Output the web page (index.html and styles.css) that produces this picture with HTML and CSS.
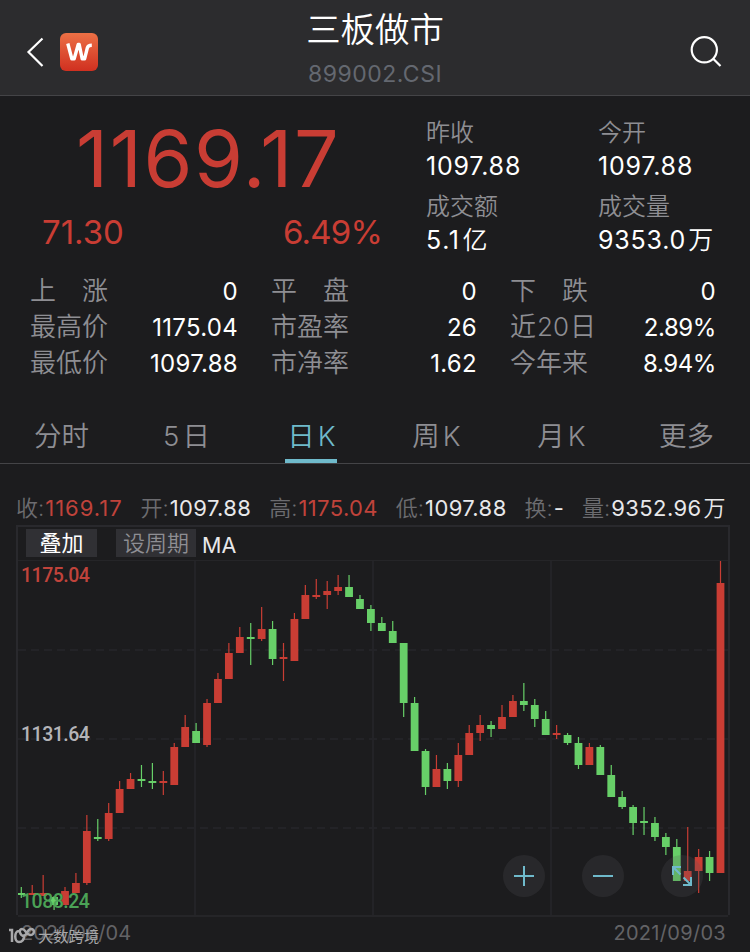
FILE: index.html
```html
<!DOCTYPE html>
<html lang="zh-CN">
<head>
  <meta charset="UTF-8">
  <meta name="viewport" content="width=device-width, initial-scale=1.0">
  <title>三板做市 899002.CSI</title>
  <link rel="stylesheet" href="styles.css">
</head>
<body>

<header class="header">
  <div class="header-left">
    <svg class="back" width="18" height="32" viewBox="0 0 18 32"><path d="M16.500 2.500 L2.500 16 L16.500 30" /></svg>
    <svg class="logo" width="38" height="38" viewBox="0 0 38 38">
      <defs>
        <linearGradient id="logo-bg" x1="0" y1="0" x2="0" y2="1">
          <stop offset="0" stop-color="#ec7045" />
          <stop offset="1" stop-color="#d03020" />
        </linearGradient>
      </defs>
      <rect width="38" height="38" rx="6" fill="url(#logo-bg)" />
      <path class="logo-mark" d="M7.800 10.500 L11.800 25.800 H14.200 L18.200 11.500 H19.200 L22.200 25.800 H24.600 L27.300 15 Q28 12.300 31.800 12.300" />
    </svg>
  </div>
  <div class="header-title">
    <h1>三板做市</h1>
    <div class="code">899002.CSI</div>
  </div>
  <div class="header-right">
    <svg width="34" height="34" viewBox="0 0 34 34"><circle cx="15.300" cy="15.800" r="12.600" /><path d="M24.200 24.700 L31.500 32" /></svg>
  </div>
</header>

<section class="quote">
  <div class="price-block">
    <div class="price">1169.17</div>
    <div class="change"><span>71.30</span><span class="percent">6.49%</span></div>
  </div>
  <dl class="summary">
    <div><dt>昨收</dt><dd>1097.88</dd></div>
    <div><dt>今开</dt><dd>1097.88</dd></div>
    <div><dt>成交额</dt><dd class="amount">5.1<i>亿</i></dd></div>
    <div><dt>成交量</dt><dd>9353.0<i>万</i></dd></div>
  </dl>
</section>

<section class="stats">
  <div class="stat"><span>上　涨</span><b>0</b></div>
  <div class="stat"><span>平　盘</span><b>0</b></div>
  <div class="stat"><span>下　跌</span><b>0</b></div>
  <div class="stat"><span>最高价</span><b>1175.04</b></div>
  <div class="stat"><span>市盈率</span><b>26</b></div>
  <div class="stat"><span>近<em>20</em>日</span><b class="percent">2.89%</b></div>
  <div class="stat"><span>最低价</span><b>1097.88</b></div>
  <div class="stat"><span>市净率</span><b>1.62</b></div>
  <div class="stat"><span>今年来</span><b class="percent">8.94%</b></div>
</section>

<nav class="tabs">
  <a>分时</a>
  <a>5<i>日</i></a>
  <a class="active">日<i>K</i></a>
  <a>周<i>K</i></a>
  <a>月<i>K</i></a>
  <a>更多</a>
</nav>

<div class="ohlc">
  <span>收:<b class="up close">1169.17</b></span>
  <span>开:<b>1097.88</b></span>
  <span>高:<b class="up">1175.04</b></span>
  <span>低:<b>1097.88</b></span>
  <span>换:<b>-</b></span>
  <span>量:<b>9352.96<i>万</i></b></span>
</div>

<main class="chart">
  <div class="toolbar">
    <button class="btn overlay">叠加</button>
    <button class="btn period">设周期</button>
    <span class="ma">MA</span>
  </div>
  <div class="plot">
    <svg id="candles" width="710" height="354" viewBox="18 561 710 354"></svg>
    <span class="axis axis-high">1175.04</span>
    <span class="axis axis-mid">1131.64</span>
    <span class="axis axis-low">1088.24</span>
    <div class="controls">
      <svg width="42" height="42" viewBox="0 0 42 42"><circle cx="21" cy="21" r="21" /><path d="M11 21 H31 M21 11 V31" /></svg>
      <svg width="42" height="42" viewBox="0 0 42 42"><circle cx="21" cy="21" r="21" /><path d="M11 21 H31" /></svg>
      <svg width="42" height="42" viewBox="0 0 42 42"><circle cx="21" cy="21" r="21" /><path d="M19.500 19.500 L12 12 M12 20 V12 H20 M22.500 22.500 L30 30 M30 22 V30 H22" /></svg>
    </div>
  </div>
</main>

<footer class="dates">
  <span>2021/06/04</span><span class="end">2021/09/03</span>
  <div class="watermark">
    <svg width="28" height="18" viewBox="0 0 28 18"><path d="M1 3 H4 V15 M11 4 C6 4 6 15 11 15 C15 15 16 12 16 9 C12 9 10 2 14 2 C18 2 18 8 22 8 C27 8 27 2 23 2 C19 2 20 8 15 9" /></svg>
    <span>大数跨境</span>
  </div>
</footer>

<script>
  // [direction, high, body top, body bottom, low] in plot coordinates
  const candles = [
    ['g', 887, 893, 895, 898], ['r', 885, 893, 895, 895], ['r', 875, 893, 896, 896],
    ['g', 896, 897, 905, 910], ['r', 887, 891, 905, 905], ['r', 873, 883, 893, 893],
    ['r', 815, 831, 883, 885], ['g', 819, 837, 839, 841], ['r', 803, 813, 839, 841],
    ['r', 781, 789, 813, 813], ['r', 773, 779, 789, 789], ['g', 765, 779, 781, 787],
    ['g', 763, 781, 783, 789], ['r', 771, 781, 783, 795], ['r', 743, 747, 785, 785],
    ['r', 715, 727, 747, 747], ['g', 723, 731, 743, 743], ['r', 699, 703, 745, 747],
    ['r', 673, 679, 703, 703], ['r', 643, 653, 679, 679], ['r', 627, 637, 653, 653],
    ['g', 623, 637, 639, 665], ['r', 607, 629, 639, 641], ['g', 621, 629, 659, 665],
    ['r', 643, 657, 659, 681], ['r', 613, 619, 661, 661], ['r', 585, 595, 619, 619],
    ['r', 579, 595, 597, 599], ['r', 581, 591, 595, 609], ['r', 575, 587, 591, 595],
    ['g', 575, 587, 597, 597], ['g', 595, 599, 609, 609], ['g', 605, 609, 623, 631],
    ['g', 617, 623, 631, 631], ['g', 621, 631, 643, 643], ['g', 643, 643, 703, 717],
    ['g', 697, 703, 751, 751], ['g', 749, 751, 787, 795], ['r', 755, 769, 787, 787],
    ['g', 763, 769, 781, 789], ['r', 743, 755, 781, 787], ['r', 725, 733, 755, 755],
    ['r', 715, 725, 733, 741], ['g', 721, 725, 729, 737], ['r', 705, 717, 729, 729],
    ['r', 695, 701, 717, 717], ['g', 683, 701, 705, 711], ['g', 699, 705, 719, 727],
    ['g', 711, 719, 735, 735], ['r', 725, 733, 735, 739], ['g', 733, 735, 743, 745],
    ['g', 737, 743, 765, 769], ['r', 743, 747, 765, 765], ['g', 745, 747, 775, 775],
    ['g', 765, 775, 797, 797], ['g', 791, 797, 807, 809], ['g', 805, 807, 823, 835],
    ['g', 807, 821, 823, 835], ['g', 817, 823, 837, 841], ['g', 833, 837, 847, 855],
    ['g', 839, 847, 881, 881], ['r', 827, 871, 881, 881], ['r', 849, 857, 871, 893],
    ['g', 851, 857, 873, 881], ['r', 561, 583, 873, 873]
  ];
  const step = 10.925;

  let html = '';
  [195, 373, 551].forEach(x => {
    html += `<path class="grid" d="M${x} 560 V915" />`;
  });
  [650, 739, 828].forEach(y => {
    html += `<path class="grid dashed" d="M18 ${y} H728" />`;
  });
  candles.forEach(([dir, high, top, bottom, low], i) => {
    const x = 21.3 + i * step;
    html += `<g class="${dir}"><rect x="${x - 0.6}" y="${high}" width="1.2" height="${low - high}" />`;
    html += `<rect x="${x - 3.9}" y="${top}" width="7.8" height="${bottom - top}" /></g>`;
  });
  document.getElementById('candles').innerHTML = html;
</script>

</body>
</html>
```
FILE: styles.css
```css
* {
  box-sizing: border-box;
}
body {
  margin: 0;
  width: 750px;
  height: 952px;
  overflow: hidden;
  background-color: #1c1c1e;
  color: #fff;
  font-family: Inter, "Noto Sans CJK SC", sans-serif;
  font-weight: 400;
}
i, em, b {
  font-style: normal;
  font-weight: inherit;
}

/* header */
.header {
  display: flex;
  height: 96px;
  background-color: #2c2c2e;
  border-bottom: 1px solid #444447;
}
.header-left, .header-right {
  width: 200px;
  display: flex;
  align-items: center;
  padding: 8px 0 0 26px;
}
.header-left {
  gap: 16px;
}
.header-right {
  justify-content: flex-end;
  padding: 6px 27px 0 0;
}
.header svg {
  fill: none;
  stroke: #fff;
  stroke-width: 2.2;
}
.header .logo rect {
  stroke: none;
}
.header .logo-mark {
  stroke-width: 3.4;
  stroke-linejoin: round;
}
.header-title {
  flex: 1;
  text-align: center;
}
h1 {
  margin: 8px 0 0;
  font-size: 34.400px;
  line-height: 44px;
  font-weight: 350;
}
.code {
  font-size: 23px;
  line-height: 44px;
  letter-spacing: 0.5px;
  color: #646870;
}

/* quote */
.quote {
  display: flex;
  height: 176px;
  padding: 17px 0 0 42px;
}
.price-block {
  width: 384px;
  color: #c93d34;
}
.price {
  font-size: 79px;
  line-height: 91px;
  letter-spacing: 1.6px;
  padding-left: 34px;
}
.change {
  display: flex;
  font-size: 33px;
  line-height: 56px;
}
.change span {
  width: 241px;
  flex-shrink: 0;
}
.change .percent {
  width: auto;
  letter-spacing: -0.8px;
}
.summary {
  display: grid;
  grid-template-columns: 172px 150px;
  grid-template-rows: 74px 74px;
  margin: 2px 0 0;
}
.summary dt {
  font-size: 24px;
  line-height: 35px;
  font-weight: 350;
  color: #8e8e93;
}
.summary dd {
  margin: 0;
  font-size: 25px;
  line-height: 32px;
  letter-spacing: 0.8px;
}
.summary i {
  margin-left: 2px;
  font-weight: 350;
}
.summary .amount {
  letter-spacing: 1.6px;
}

/* stats */
.stats {
  display: grid;
  grid-template-columns: 208px 206px 206px;
  grid-auto-rows: 36px;
  column-gap: 33px;
  padding-left: 30px;
}
.stat {
  display: flex;
  justify-content: space-between;
}
.stat span {
  font-size: 26px;
  line-height: 38px;
  font-weight: 350;
  color: #8e8e93;
}
.stat em {
  margin: 0 1px;
}
.stat b {
  font-size: 24px;
  line-height: 40px;
  letter-spacing: 0.3px;
}
.stat .percent {
  letter-spacing: -0.4px;
}

/* tabs */
.tabs {
  display: flex;
  height: 84px;
  border-bottom: 1px solid #444447;
}
.tabs a {
  flex: 1;
  display: flex;
  justify-content: center;
  position: relative;
  padding: 36px 2px 0 0;
  font-size: 27.500px;
  line-height: 40px;
  font-weight: 350;
  color: #8e8e93;
}
.tabs i {
  margin-left: 3px;
}
.tabs .active {
  color: #6fbacb;
}
.tabs .active::after {
  content: "";
  position: absolute;
  left: 35px;
  bottom: 0;
  width: 52px;
  height: 4px;
  background-color: #6fbacb;
}

/* open / high / low / close line */
.ohlc {
  display: flex;
  justify-content: space-between;
  height: 61px;
  padding: 27px 24px 0 16px;
  font-size: 22px;
  line-height: 34px;
  color: #6c6c70;
  font-weight: 350;
  white-space: nowrap;
}
.ohlc b {
  margin-left: 1px;
  color: #e8e8ea;
  font-weight: 400;
  letter-spacing: 0.4px;
}
.ohlc i {
  margin-left: 2px;
  font-weight: 350;
}
.ohlc .up {
  color: #c0433b;
}
.ohlc .close {
  letter-spacing: 1px;
}

/* chart */
.chart {
  width: 714px;
  height: 390px;
  margin-left: 16px;
  border: 2px solid #29292d;
  border-bottom: none;
}
.toolbar {
  display: flex;
  height: 33px;
  padding: 2px 0 0 8px;
}
.btn {
  height: 28px;
  padding: 0;
  border: none;
  background-color: #303034;
  font-family: inherit;
  font-size: 22px;
  line-height: 28px;
}
.overlay {
  width: 71px;
  color: #fff;
}
.period {
  width: 80px;
  margin-left: 19px;
  color: #8e8e93;
  font-weight: 350;
}
.ma {
  margin-left: 6px;
  font-size: 21.500px;
  line-height: 33px;
  color: #e8e8ea;
}
.plot {
  position: relative;
  height: 357px;
  border-top: 1px solid #252528;
  border-bottom: 2px solid #252528;
}
.plot svg {
  display: block;
}
.grid {
  stroke: #232327;
  stroke-width: 2;
}
.dashed {
  stroke-dasharray: 8 5;
}
.g {
  fill: #67cf68;
}
.r {
  fill: #c93d34;
}
.axis {
  position: absolute;
  left: 3px;
  font-family: Roboto, sans-serif;
  font-size: 19.500px;
  font-weight: 500;
  line-height: 20px;
  letter-spacing: -0.5px;
  color: #b4b4b8;
}
.axis-high {
  top: 5px;
  color: #c0433b;
}
.axis-mid {
  top: 164px;
}
.axis-low {
  top: 331px;
  color: #4ba256;
}
.controls {
  position: absolute;
  left: 485px;
  top: 294px;
  display: flex;
  gap: 37px;
}
.controls circle {
  fill: rgba(88, 88, 92, 0.22);
}
.controls path {
  fill: none;
  stroke: #6fbacb;
  stroke-width: 2;
}

/* dates */
.dates {
  position: relative;
  display: flex;
  justify-content: space-between;
  padding: 6px 24px 0 21px;
  font-size: 20px;
  line-height: 24px;
  color: #636366;
}
.dates .end {
  letter-spacing: 0.3px;
}
.watermark {
  position: absolute;
  left: 8px;
  top: 12px;
  display: flex;
  gap: 2px;
  font-size: 15.300px;
  line-height: 20px;
  color: #a8a8aa;
}
.watermark svg {
  fill: none;
  stroke: #a8a8aa;
  stroke-width: 2.5;
}
```
